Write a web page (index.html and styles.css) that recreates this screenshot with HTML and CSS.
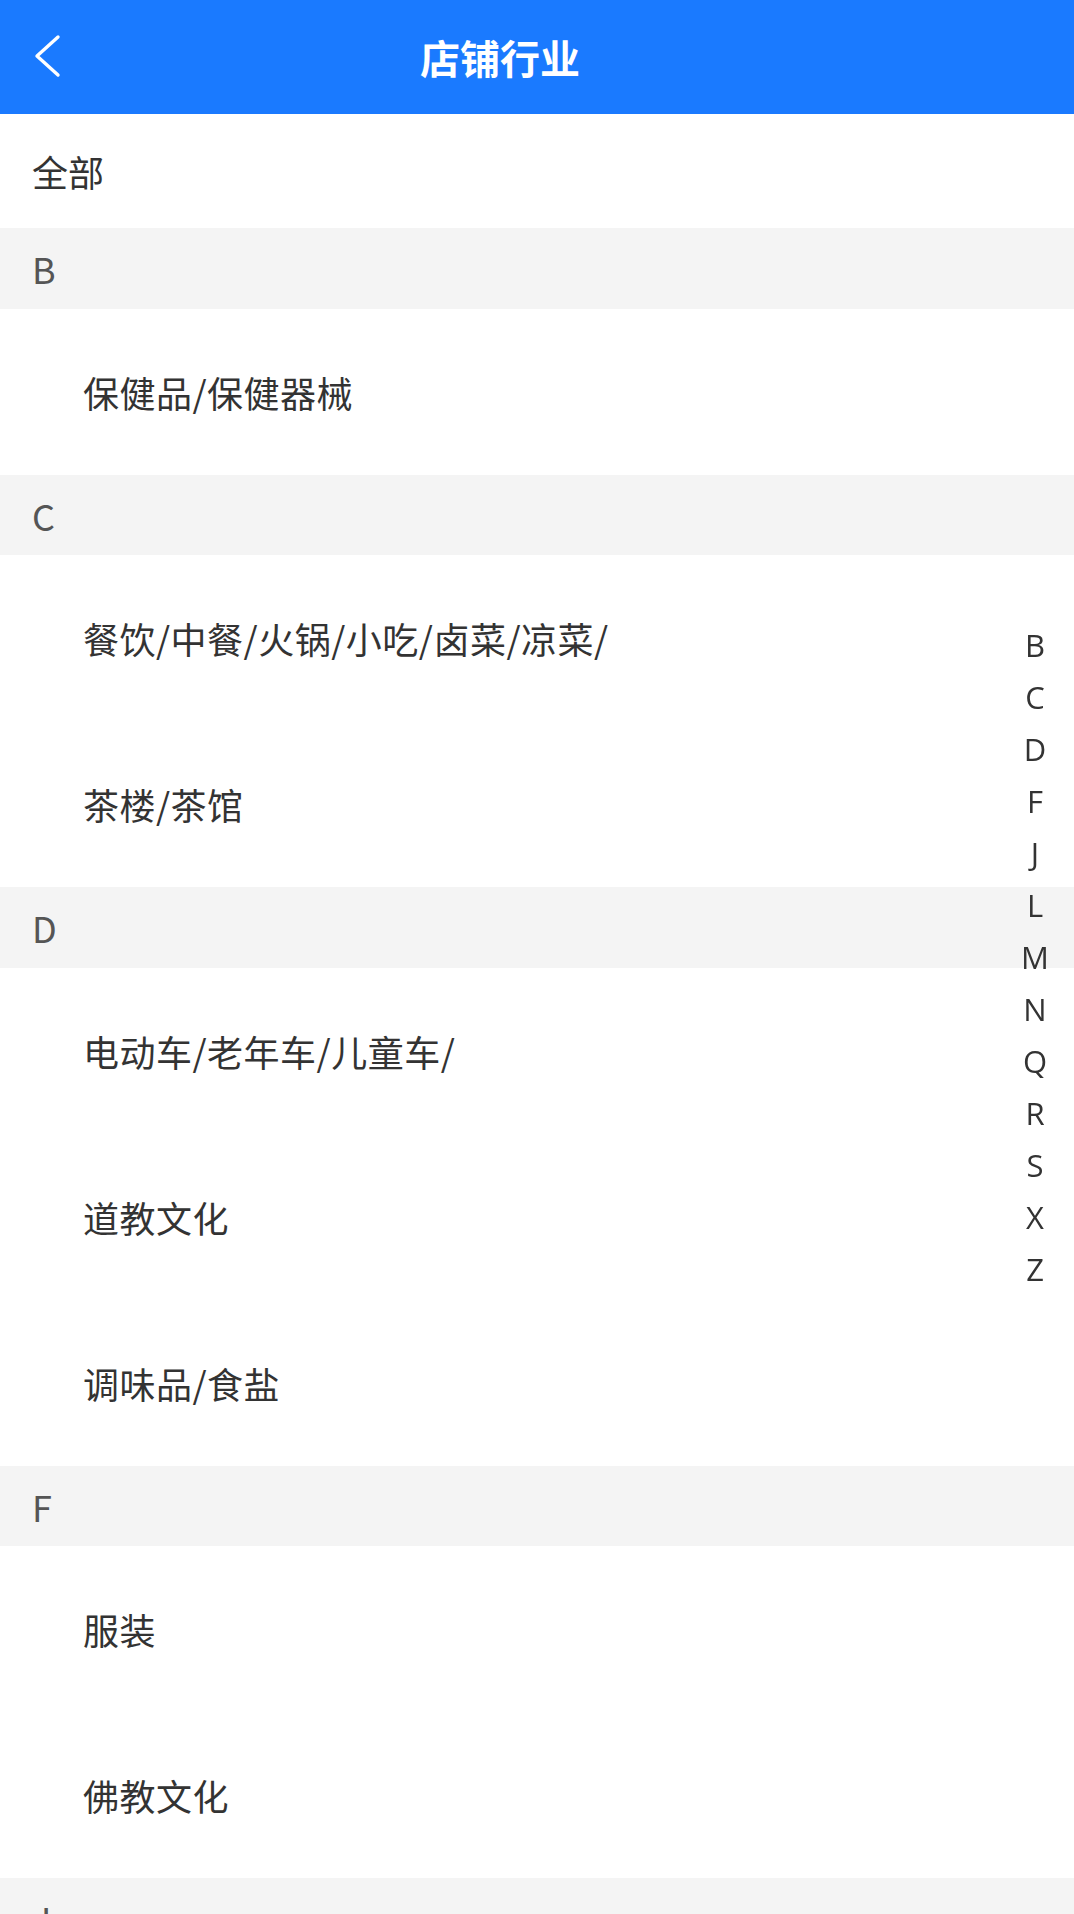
FILE: index.html
```html
<!DOCTYPE html>
<html lang="zh-CN">
<head>
<meta charset="utf-8">
<title>店铺行业</title>
<link rel="stylesheet" href="styles.css">
</head>
<body>
<header class="topbar">
  <div class="back">
    <svg class="back-icon" width="30" height="48" viewBox="0 0 30 48">
      <polyline points="24,4 3,23 24,42" fill="none" stroke="#fff" stroke-width="3.4" stroke-linecap="round" stroke-linejoin="round"/>
    </svg>
  </div>
  <h1 class="title">店铺行业</h1>
  <div class="spacer"></div>
</header>
<main class="list">
  <div class="all-row">全部</div>
  <div class="group-head">B</div>
  <div class="item">保健品/保健器械</div>
  <div class="group-head">C</div>
  <div class="item">餐饮/中餐/火锅/小吃/卤菜/凉菜/</div>
  <div class="item">茶楼/茶馆</div>
  <div class="group-head">D</div>
  <div class="item">电动车/老年车/儿童车/</div>
  <div class="item">道教文化</div>
  <div class="item">调味品/食盐</div>
  <div class="group-head">F</div>
  <div class="item">服装</div>
  <div class="item">佛教文化</div>
  <div class="group-head">J</div>
  <div class="item">家居/家具</div>
  <div class="item">酒水/饮料</div>
  <div class="group-head">L</div>
  <div class="item">粮油/米面</div>
</main>
<nav class="index-bar">
  <span>B</span><span>C</span><span>D</span><span>F</span><span>J</span><span>L</span><span>M</span><span>N</span><span>Q</span><span>R</span><span>S</span><span>X</span><span>Z</span>
</nav>
</body>
</html>
```
FILE: styles.css
```css
* { box-sizing: border-box; }
html, body { margin: 0; padding: 0; }
body {
  background: #ffffff;
  font-family: "Noto Sans CJK SC", "Noto Sans", sans-serif;
  color: #333333;
}
.topbar {
  height: 114px;
  background: #1a7aff;
  display: flex;
  align-items: center;
}
.back {
  width: 74px;
  height: 114px;
  display: flex;
  align-items: center;
  padding-left: 34px;
}
.back-icon { display: block; }
.title {
  flex: 1;
  margin: 0;
  text-align: center;
  color: #ffffff;
  font-size: 40px;
  font-weight: 700;
  line-height: 114px;
}
.spacer { width: 148px; }
.list { display: flex; flex-direction: column; }
.all-row {
  height: 114px;
  display: flex;
  align-items: center;
  padding-left: 32px;
  font-size: 36px;
  color: #333333;
}
.group-head {
  height: 80.5px;
  display: flex;
  align-items: center;
  padding-left: 32px;
  background: #f4f4f4;
  font-size: 36px;
  color: #555555;
}
.item {
  height: 166px;
  display: flex;
  align-items: center;
  padding-left: 83px;
  font-size: 36px;
  letter-spacing: 0.5px;
  color: #333333;
}
.index-bar {
  position: fixed;
  right: 14px;
  top: 50%;
  transform: translateY(-50%);
  width: 50px;
  display: flex;
  flex-direction: column;
  align-items: center;
  font-family: "Open Sans", "Noto Sans", sans-serif;
  font-size: 31px;
  line-height: 52px;
  color: #333333;
}
```
